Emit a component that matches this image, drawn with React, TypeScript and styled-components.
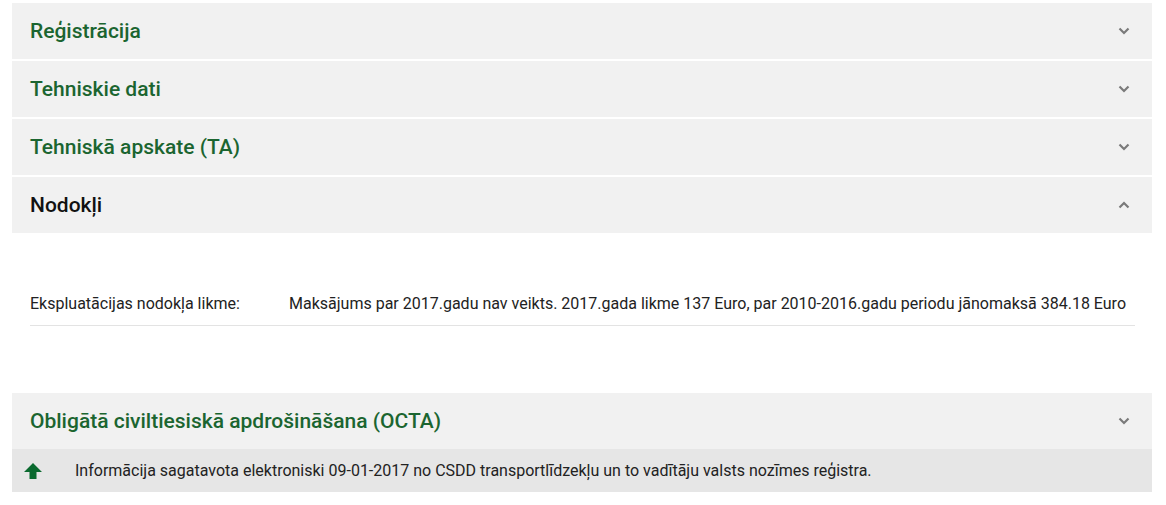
import React from "react";
import styled, { createGlobalStyle } from "styled-components";

const Global = createGlobalStyle`
  body { margin: 0; background: #fff; font-family: Roboto, "Liberation Sans", Arial, sans-serif; }
`;

const Page = styled.div`
  padding: 3px 14px 0 12px;
  display: flex;
  flex-direction: column;
`;

const Panel = styled.div`
  display: flex;
  align-items: center;
  justify-content: space-between;
  height: 56px;
  background: #f1f1f1;
  padding: 0 22px 0 18px;
  margin-bottom: 2px;
`;

const Title = styled.h2<{ $active?: boolean }>`
  margin: 0;
  font-size: 21px;
  font-weight: 500;
  color: ${(p) => (p.$active ? "#111" : "#1b6530")};
`;

const Content = styled.div`
  padding: 56px 17px 0 18px;
  margin-bottom: 67px;
`;

const Row = styled.div`
  display: flex;
  align-items: center;
  padding: 2px 0 10px;
  border-bottom: 1px solid #e3e3e3;
  font-size: 16px;
  line-height: 22px;
  color: #222;
`;

const Label = styled.div`
  width: 259px;
  flex-shrink: 0;
`;

const Footer = styled.div`
  display: flex;
  align-items: center;
  height: 43px;
  margin-top: -2px;
  background: #e6e6e6;
  padding: 0 0 0 12px;
  font-size: 16px;
  color: #222;
  gap: 33px;
`;

const Chevron = ({ up }: { up?: boolean }) => (
  <svg width="12" height="8" viewBox="0 0 12 8">
    <path
      d={up ? "M1.5 6.5 L6 2 L10.5 6.5" : "M1.5 1.5 L6 6 L10.5 1.5"}
      fill="none"
      stroke="#7a7a7a"
      strokeWidth="2.2"
    />
  </svg>
);

const ArrowUp = () => (
  <svg width="18" height="16" viewBox="0 0 18 16">
    <path d="M9 0 L18 9 L12.5 9 L12.5 16 L5.5 16 L5.5 9 L0 9 Z" fill="#0b6a2f" />
  </svg>
);

const sections = ["Reģistrācija", "Tehniskie dati", "Tehniskā apskate (TA)"];

export default function App() {
  return (
    <>
      <Global />
      <Page>
        {sections.map((s) => (
          <Panel key={s}>
            <Title>{s}</Title>
            <Chevron />
          </Panel>
        ))}
        <Panel>
          <Title $active>Nodokļi</Title>
          <Chevron up />
        </Panel>
        <Content>
          <Row>
            <Label>Ekspluatācijas nodokļa likme:</Label>
            <div>
              Maksājums par 2017.gadu nav veikts. 2017.gada likme 137 Euro, par 2010-2016.gadu periodu jānomaksā 384.18 Euro
            </div>
          </Row>
        </Content>
        <Panel>
          <Title>Obligātā civiltiesiskā apdrošināšana (OCTA)</Title>
          <Chevron />
        </Panel>
        <Footer>
          <ArrowUp />
          <span>Informācija sagatavota elektroniski 09-01-2017 no CSDD transportlīdzekļu un to vadītāju valsts nozīmes reģistra.</span>
        </Footer>
      </Page>
    </>
  );
}
